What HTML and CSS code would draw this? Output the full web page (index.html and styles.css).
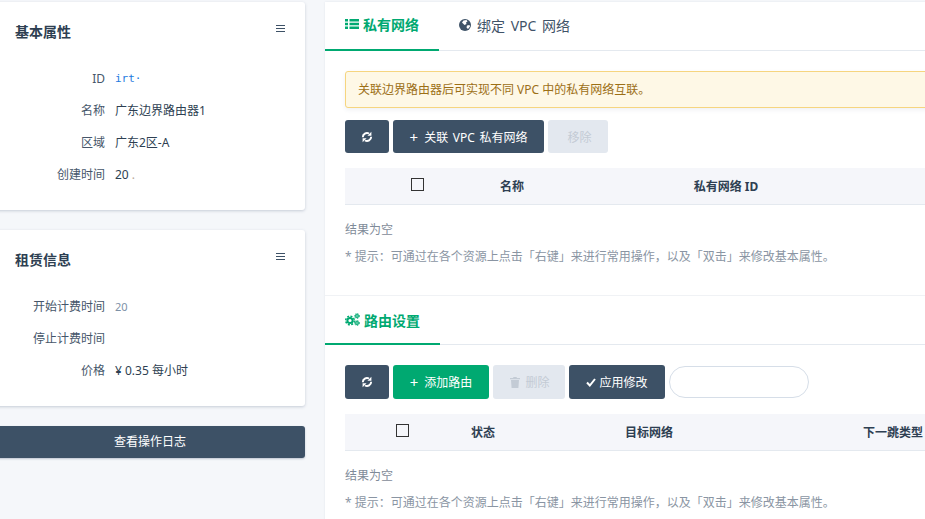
FILE: index.html
```html
<!DOCTYPE html>
<html>
	<head>
		<meta charset="UTF-8">
		<title>边界路由器</title>
		<link rel="stylesheet" href="styles.css">
	</head>
	<body>
		<div class="page">
			<div class="side">
				<div class="card card-base">
					<div class="card-head">
						<h3>基本属性</h3>
						<span class="menu-icon"></span>
					</div>
					<ul class="props">
						<li><label>ID</label><span class="mono">irt·</span></li>
						<li><label>名称</label><span>广东边界路由器1</span></li>
						<li><label>区域</label><span>广东2区-A</span></li>
						<li><label>创建时间</label><span>20 <i class="faint">.</i></span></li>
					</ul>
				</div>
				<div class="card card-rent">
					<div class="card-head">
						<h3>租赁信息</h3>
						<span class="menu-icon"></span>
					</div>
					<ul class="props">
						<li><label>开始计费时间</label><span class="muted">20</span></li>
						<li><label>停止计费时间</label><span></span></li>
						<li><label>价格</label><span>¥ 0.35 每小时</span></li>
					</ul>
				</div>
				<a class="log-btn" href="#">查看操作日志</a>
			</div>

			<div class="main">
				<div class="section section-vpc">
					<ul class="tabs">
						<li class="active">
							<svg class="tab-icon" width="14" height="12" viewBox="0 0 14 12"><path fill="currentColor" d="M0 1h3v2.400H0zM4.500 1H14v2.400H4.500zM0 4.800h3v2.400H0zM4.500 4.800H14v2.400H4.500zM0 8.600h3V11H0zM4.500 8.600H14V11H4.500z"/></svg>
							私有网络
						</li>
						<li>
							<svg class="tab-icon" width="12" height="12" viewBox="0 0 12 12"><circle cx="6" cy="6" r="6" fill="currentColor"/><path fill="#fff" d="M4.500 1.500 7.500 1l1 1.500-1.500 1 .5 1.500-2 1L4 4.500 3 3.500zM8 6.500l2.500-.5.500 1.500-2 2.500-1.500-1.500z"/></svg>
							绑定 VPC 网络
						</li>
					</ul>
					<div class="alert">关联边界路由器后可实现不同 VPC 中的私有网络互联。</div>
					<div class="toolbar">
						<a class="btn btn-icon" href="#">
							<svg width="12" height="12" viewBox="0 0 12 12"><g fill="none" stroke="currentColor" stroke-width="1.900"><path d="M1.800 6.200A4.200 4.200 0 0 1 8 2.500"/><path d="M10.200 5.800A4.200 4.200 0 0 1 4 9.500"/></g><path fill="currentColor" d="M10.400 .8V4.800H6.400zM1.600 11.200V7.200h4z"/></svg>
						</a>
						<a class="btn btn-link" href="#"><span class="plus">+</span>关联 VPC 私有网络</a>
						<a class="btn btn-off btn-remove" href="#">移除</a>
					</div>
					<div class="table-head cols-vpc">
						<span class="check"></span>
						<span>名称</span>
						<span>私有网络 ID</span>
					</div>
					<p class="empty">结果为空</p>
					<p class="hint">* 提示：可通过在各个资源上点击「右键」来进行常用操作，以及「双击」来修改基本属性。</p>
				</div>

				<div class="section section-route">
					<ul class="tabs">
						<li class="active">
							<svg class="tab-icon" width="15" height="13" viewBox="0 0 15 13"><g fill="none" stroke="currentColor"><circle cx="5" cy="7.500" r="2.600" stroke-width="2"/><circle cx="5" cy="7.500" r="4.300" stroke-width="1.500" stroke-dasharray="2 1.370"/><circle cx="12" cy="3" r="1.300" stroke-width="1.300"/><circle cx="12" cy="3" r="2.400" stroke-width="1" stroke-dasharray="1.200 .9"/><circle cx="12" cy="10" r="1.300" stroke-width="1.300"/><circle cx="12" cy="10" r="2.400" stroke-width="1" stroke-dasharray="1.200 .9"/></g></svg>
							路由设置
						</li>
					</ul>
					<div class="toolbar toolbar-route">
						<a class="btn btn-icon" href="#">
							<svg width="12" height="12" viewBox="0 0 12 12"><g fill="none" stroke="currentColor" stroke-width="1.900"><path d="M1.800 6.200A4.200 4.200 0 0 1 8 2.500"/><path d="M10.200 5.800A4.200 4.200 0 0 1 4 9.500"/></g><path fill="currentColor" d="M10.400 .8V4.800H6.400zM1.600 11.200V7.200h4z"/></svg>
						</a>
						<a class="btn btn-green" href="#"><span class="plus">+</span>添加路由</a>
						<a class="btn btn-off btn-del" href="#">
							<svg class="btn-svg" width="10" height="11" viewBox="0 0 10 11"><path fill="currentColor" d="M3.500 0h3l.5 1h3v1.200H0V1h3zM1 3h8l-.6 8H1.600z"/></svg>
							删除
						</a>
						<a class="btn btn-apply" href="#">
							<svg class="btn-svg" width="10" height="9" viewBox="0 0 10 9"><path fill="none" stroke="currentColor" stroke-width="2" d="M1 4.500 3.800 7.500 9 1"/></svg>
							应用修改
						</a>
						<input class="search" type="text">
					</div>
					<div class="table-head cols-route">
						<span class="check"></span>
						<span>状态</span>
						<span>目标网络</span>
						<span>下一跳类型</span>
					</div>
					<p class="empty">结果为空</p>
					<p class="hint">* 提示：可通过在各个资源上点击「右键」来进行常用操作，以及「双击」来修改基本属性。</p>
				</div>
			</div>
		</div>
	</body>
</html>
```

FILE: styles.css
```css
*{
	margin: 0;
	padding: 0;
	box-sizing: border-box;
}
ul,li{
	list-style: none;
}
a{
	text-decoration: none;
}
html,body{
	height: 100%;
	overflow: hidden;
}
body{
	background: #f5f7fa;
	color: #2e3f52;
	font-family: "Noto Sans", "Noto Sans CJK SC", sans-serif;
	font-size: 12px;
}
.page{
	display: flex;
	width: 1100px;
	margin-left: -5px;
	padding-top: 2px;
}

/* left column */
.side{
	width: 310px;
	margin-right: 20px;
	flex-shrink: 0;
}
.card{
	background: #fff;
	border-radius: 3px;
	box-shadow: 0 1px 3px rgba(60,80,110,.25);
	padding: 0 20px;
	margin-bottom: 20px;
}
.card-base{
	height: 208px;
}
.card-rent{
	height: 176px;
}
.card-head{
	display: flex;
	justify-content: space-between;
	height: 61px;
	padding-top: 20px;
}
.card-head h3{
	font-size: 14px;
	line-height: 20px;
	font-weight: 700;
}
.menu-icon{
	width: 9px;
	height: 7px;
	margin-top: 3px;
	border-top: 1px solid #3d5166;
	border-bottom: 1px solid #3d5166;
}
.menu-icon:after{
	content: "";
	display: block;
	height: 1px;
	margin-top: 2px;
	background: #3d5166;
}
.props li{
	display: flex;
	height: 32px;
	line-height: 32px;
}
.props label{
	width: 90px;
	margin-right: 10px;
	text-align: right;
	white-space: nowrap;
	direction: rtl;
	color: #46566a;
}
.mono{
	font-family: "DejaVu Sans Mono", monospace;
	font-size: 11px;
	color: #1f7be0;
}
.muted{
	font-size: 11px;
	color: #7d90a6;
}
.faint{
	font-style: normal;
	color: #b9a99a;
}
.log-btn{
	display: block;
	height: 32px;
	line-height: 32px;
	text-align: center;
	color: #fff;
	background: #3d5166;
	border-radius: 3px;
	box-shadow: 0 1px 2px rgba(60,80,110,.3);
}

/* right column */
.main{
	width: 775px;
	min-height: 530px;
	background: #fff;
	box-shadow: 0 0 2px rgba(60,80,110,.1);
}
.section{
	padding: 0 0 0 20px;
}
.section-vpc{
	height: 294px;
	border-bottom: 1px solid #f0f2f5;
}
.tabs{
	display: flex;
	margin-left: -20px;
	border-bottom: 1px solid #e4e9ef;
	height: 49px;
}
.tabs li{
	display: flex;
	align-items: center;
	gap: 6px;
	height: 49px;
	font-size: 14px;
	padding: 0 20px 3px;
	white-space: nowrap;
	word-spacing: 2px;
	color: #3f5368;
}
.tabs .active{
	color: #00a971;
	font-weight: 700;
	gap: 4px;
	border-bottom: 2px solid #00a971;
	width: 114px;
}
.section-route .tabs .active{
	width: 115px;
	padding-bottom: 0;
}
.tab-icon{
	flex-shrink: 0;
}
.alert{
	height: 37px;
	line-height: 35px;
	margin-top: 20px;
	padding-left: 12px;
	color: #9c6f16;
	background: #fef8e6;
	border: 1px solid #f6d57f;
	border-radius: 3px;
	box-shadow: 0 2px 4px rgba(60,80,110,.08);
}
.toolbar{
	display: flex;
	gap: 4px;
	margin-top: 12px;
}
.btn{
	display: flex;
	align-items: center;
	justify-content: center;
	height: 33px;
	color: #fff;
	background: #3d5166;
	border-radius: 3px;
	white-space: nowrap;
}
.btn-icon{
	width: 44px;
}
.btn-link{
	width: 151px;
	word-spacing: 1.500px;
}
.btn-off{
	color: #c3cbd5;
	background: #e3e8ef;
}
.btn-green{
	width: 96px;
	background: #00a971;
}
.btn-remove{
	width: 60px;
	padding-left: 3px;
}
.btn-del{
	width: 72px;
	padding-left: 2px;
}
.btn-apply{
	width: 96px;
}
.plus{
	font-size: 15px;
	margin-right: 6px;
}
.btn-svg{
	margin-right: 5px;
}
.btn-apply .btn-svg{
	margin-right: 3px;
}
.toolbar-route{
	margin-top: 20px;
	align-items: center;
}
.toolbar-route .btn{
	height: 34px;
}
.search{
	width: 140px;
	height: 32px;
	border: 1px solid #d6dee8;
	border-radius: 16px;
	background: #fff;
	outline: none;
}
.table-head{
	display: grid;
	align-items: center;
	height: 37px;
	margin-top: 15px;
	background: #f5f6fa;
	border-bottom: 1px solid #e4e9ef;
	text-align: center;
	font-weight: 700;
	white-space: nowrap;
}
.cols-vpc{
	grid-template-columns: 145px 44px 384px;
}
.cols-route{
	grid-template-columns: 115px 46px 286px 202px;
}
.check{
	display: block;
	width: 13px;
	height: 13px;
	margin: -3px auto 0;
	border: 1px solid #333;
}
.empty{
	margin-top: 16px;
	line-height: 18px;
	color: #7f8b99;
}
.hint{
	margin-top: 9px;
	line-height: 18px;
	color: #8a95a3;
	white-space: nowrap;
}
```
